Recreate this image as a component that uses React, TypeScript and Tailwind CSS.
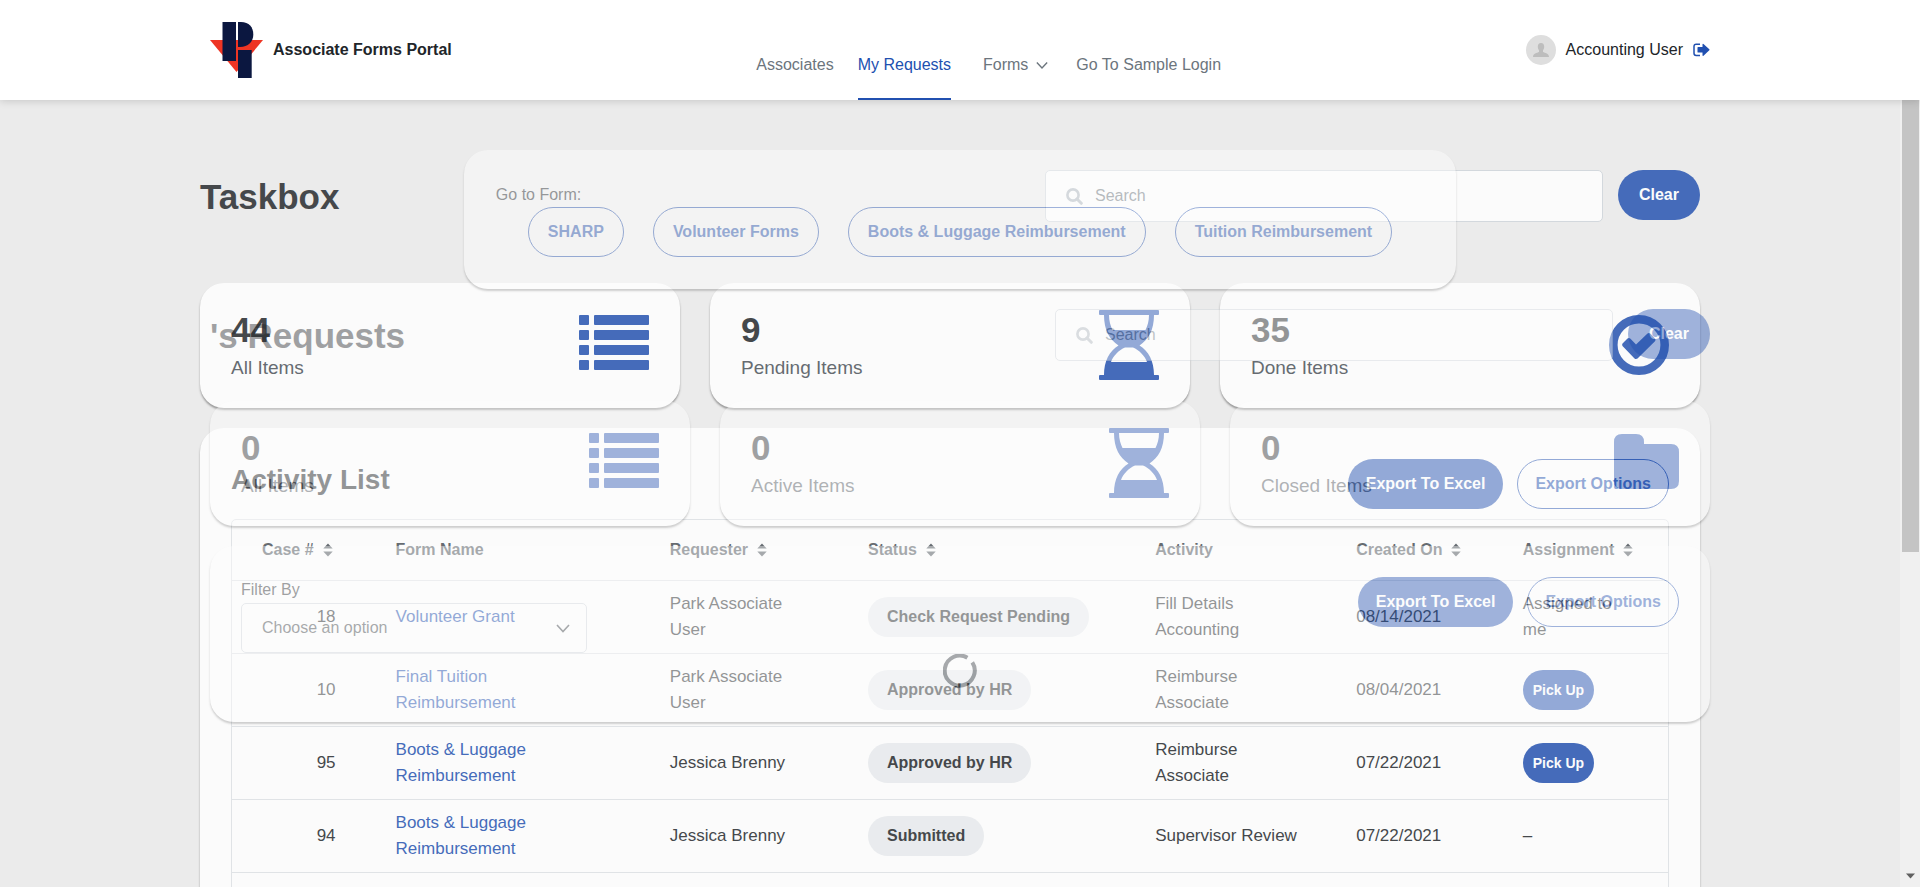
import React from "react";

type IconProps = { className?: string };

const card =
  "rounded-[24px] bg-white shadow-[0_2px_2px_rgba(0,0,0,0.42)]";
const outlineButton =
  "h-[50px] whitespace-nowrap rounded-full border border-[#2150b0] text-base font-bold text-[#2150b0]";
const solidButton =
  "h-[50px] whitespace-nowrap rounded-full bg-[#2150b0] text-base font-bold text-white";

function Logo() {
  return (
    <svg width="53" height="56" viewBox="0 0 53 56" role="img" aria-label="Logo">
      <path d="M0 18H53L26.5 50Z" fill="#ee3524" />
      <path d="M12.5 0H26V39H12.5Z" fill="#0b1740" />
      <path d="M28 0H31C39 0 43.3 5 43.3 12.5S38 25 30 25H28Z" fill="#0b1740" />
      <path d="M28 28H41.7V56H28Z" fill="#0b1740" />
      <path d="M26.4 0H27.8V18H26.4Z" fill="#fff" />
    </svg>
  );
}

function ListIcon({ className }: IconProps) {
  return (
    <svg width="70" height="70" viewBox="0 0 70 70" fill="currentColor" className={className} aria-hidden="true">
      {[5, 20, 35, 50].map((y) => (
        <g key={y}>
          <rect x="0" y={y} width="10" height="10" rx="1" />
          <rect x="15" y={y} width="55" height="10" rx="1" />
        </g>
      ))}
    </svg>
  );
}

function HourglassIcon({ className }: IconProps) {
  return (
    <svg width="60" height="70" viewBox="0 0 60 70" fill="currentColor" className={className} aria-hidden="true">
      <rect width="60" height="5" rx="1" />
      <rect y="65" width="60" height="5" rx="1" />
      <path
        fillRule="evenodd"
        d="M5 5C5 20 10.500 29.500 19.500 35.500C10.500 41 5 51 5 65H55C55 51 49.500 41 40.500 35.500C49.500 29.500 55 20 55 5ZM10 5H50C50 11 48.500 16 46.500 20H13.500C11.500 16 10 11 10 5ZM26 37.500H34C40 40 46 46 48 52H12C14 46 20 40 26 37.500Z"
      />
    </svg>
  );
}

function DoneIcon({ className }: IconProps) {
  return (
    <svg width="60" height="70" viewBox="0 0 60 70" fill="currentColor" className={className} aria-hidden="true">
      <circle cx="30" cy="35" r="25.700" fill="none" stroke="currentColor" strokeWidth="8.600" />
      <path d="M13.500 33.500L18.500 28.500Q20 27.500 21.500 28.800L27 34.500L38.500 23.500Q40 22.500 41.500 23.800L46.200 28.700Q47 30 46 31.200L28.500 48.500Q27 49.500 25.500 48.400L13.500 36Q12.700 34.700 13.500 33.500Z" />
    </svg>
  );
}

function FolderIcon({ className }: IconProps) {
  return (
    <svg width="65" height="70" viewBox="0 0 65 70" fill="currentColor" className={className} aria-hidden="true">
      <path d="M8 6H22Q30 6 30 14V16H57Q65 16 65 24V53Q65 61 57 61H8Q0 61 0 53V14Q0 6 8 6Z" />
    </svg>
  );
}

function SearchIcon({ className }: IconProps) {
  return (
    <svg width="17" height="17" viewBox="0 0 17 17" fill="none" stroke="currentColor" className={className} aria-hidden="true">
      <circle cx="7" cy="7" r="5.600" strokeWidth="2.600" />
      <path d="M11 11L15.300 15.300" strokeWidth="3" strokeLinecap="round" />
    </svg>
  );
}

function Chevron({ className, size = 14 }: IconProps & { size?: number }) {
  return (
    <svg width={size} height={size} viewBox="0 0 14 14" fill="none" stroke="currentColor" className={className} aria-hidden="true">
      <path d="M1 4L7 10.500L13 4" strokeWidth="1.600" />
    </svg>
  );
}

function SortIcon() {
  return (
    <svg width="10" height="14" viewBox="0 0 10 14" fill="currentColor" aria-hidden="true">
      <path d="M5 0.500L9.700 5.500H0.300Z" />
      <path d="M5 13.500L9.700 8.500H0.300Z" />
    </svg>
  );
}

function SignOutIcon() {
  return (
    <svg width="17" height="14" viewBox="0 0 17 14" aria-hidden="true">
      <path d="M7 1.200H3.200Q1 1.200 1 3.400V10.200Q1 12.400 3.200 12.400H7" fill="none" stroke="#2150b0" strokeWidth="1.500" />
      <path d="M4.500 4.600Q4.500 4 5.100 4H9.500V1.200Q9.700 0.300 10.500 0.900L16.300 6.300Q16.800 6.800 16.300 7.300L10.500 12.700Q9.700 13.200 9.500 12.400V9.600H5.100Q4.500 9.600 4.500 9Z" fill="#2150b0" />
    </svg>
  );
}

function Spinner() {
  return (
    <svg width="34" height="34" viewBox="0 0 34 34" fill="none" role="img" aria-label="Loading">
      <path d="M24.400 3.700A15 15 0 1 0 29.300 8.400" stroke="#343a40" strokeWidth="4" />
    </svg>
  );
}

function Header() {
  return (
    <header className="relative z-10 h-[100px] shrink-0 bg-white shadow-[0_1px_8px_rgba(0,0,0,0.16)]">
      <div className="mx-auto flex h-full max-w-[1500px] justify-between">
        <a href="#home" className="flex items-center gap-[10px] font-bold">
          <Logo />
          Associate Forms Portal
        </a>
        <nav className="flex items-end gap-6 text-[#6c757d]" aria-label="Main">
          <a href="#associates" className="flex h-[68px] items-center border-b-2 border-transparent">
            Associates
          </a>
          <a href="#requests" className="flex h-[68px] items-center border-b-2 border-[#2150b0] text-[#2150b0]">
            My Requests
          </a>
          <button type="button" className="ml-2 flex h-[68px] items-center gap-2 border-b-2 border-transparent">
            Forms
            <Chevron size={12} />
          </button>
          <a href="#login" className="ml-1 flex h-[68px] items-center border-b-2 border-transparent">
            Go To Sample Login
          </a>
        </nav>
        <div className="flex items-center justify-end gap-[10px]">
          <svg width="30" height="30" viewBox="0 0 30 30" aria-hidden="true">
            <circle cx="15" cy="15" r="15" fill="#dedede" />
            <path d="M15 8C17.200 8 18.200 9.600 18.200 11.800C18.200 13.600 17.400 14.800 17 15.600V17C19 18 23 18.400 23 22H7C7 18.400 11 18 13 17V15.600C12.600 14.800 11.800 13.600 11.800 11.800C11.800 9.600 12.800 8 15 8Z" fill="#bdbdbd" />
          </svg>
          <span>Accounting User</span>
          <button type="button" aria-label="Sign out">
            <SignOutIcon />
          </button>
        </div>
      </div>
    </header>
  );
}

function SearchRow({ title, label }: { title: string; label: string }) {
  return (
    <div className="flex items-start">
      <h1 className="grow text-[35px] leading-[54px] font-bold">{title}</h1>
      <div className="flex h-[52px] w-[558px] items-center gap-3 rounded-[5px] border border-[#ced4da] bg-white pl-5">
        <SearchIcon className="text-[#adb5bd]" />
        <input
          type="search"
          aria-label={label}
          placeholder="Search"
          className="min-w-0 grow bg-transparent outline-none placeholder:text-[#6c757d]"
        />
      </div>
      <button type="button" className={`ml-[15px] px-[21px] ${solidButton}`}>
        Clear
      </button>
    </div>
  );
}

type Stat = { value: string; label: string; Icon: (p: IconProps) => React.ReactElement };

function Stats({ items }: { items: Stat[] }) {
  return (
    <div className="grid grid-cols-3 gap-[30px]">
      {items.map(({ value, label, Icon }) => (
        <section key={label} className={`flex h-[125px] justify-between px-[31px] pt-[27px] ${card}`}>
          <div>
            <p className="text-[35px] leading-[40px] font-bold">{value}</p>
            <p className="pt-[6px] text-[19px] leading-[24px] text-[#495057]">{label}</p>
          </div>
          <Icon className="text-[#2150b0]" />
        </section>
      ))}
    </div>
  );
}

function ExportButtons() {
  return (
    <div className="flex gap-[14px]">
      <button type="button" className={`px-[18px] ${solidButton}`}>
        Export To Excel
      </button>
      <button type="button" className={`px-[17px] ${outlineButton}`}>
        Export Options
      </button>
    </div>
  );
}

const columns = [
  { name: "Case #", sortable: true, width: "w-[9.300%]" },
  { name: "Form Name", sortable: false, width: "w-[19.100%]" },
  { name: "Requester", sortable: true, width: "w-[13.800%]" },
  { name: "Status", sortable: true, width: "w-[20%]" },
  { name: "Activity", sortable: false, width: "w-[14%]" },
  { name: "Created On", sortable: true, width: "w-[11.600%]" },
  { name: "Assignment", sortable: true, width: "w-[12.200%]" },
];

const rows = [
  ["18", "Volunteer Grant", "Park Associate User", "Check Request Pending", "Fill Details Accounting", "08/14/2021", "Assigned to me"],
  ["10", "Final Tuition Reimbursement", "Park Associate User", "Approved by HR", "Reimburse Associate", "08/04/2021", "Pick Up"],
  ["95", "Boots & Luggage Reimbursement", "Jessica Brenny", "Approved by HR", "Reimburse Associate", "07/22/2021", "Pick Up"],
  ["94", "Boots & Luggage Reimbursement", "Jessica Brenny", "Submitted", "Supervisor Review", "07/22/2021", "–"],
];

function ActivityTable() {
  return (
    <div className="rounded-[5px] border border-[#dee2e6]">
      <table className="w-full table-fixed text-left">
        <thead>
          <tr className="h-[60px] text-[#495057]">
            {columns.map((c) => (
              <th key={c.name} scope="col" className={`pl-[30px] font-bold ${c.width}`}>
                {c.sortable ? (
                  <button type="button" className="flex items-center gap-[9px] whitespace-nowrap">
                    {c.name}
                    <SortIcon />
                  </button>
                ) : (
                  c.name
                )}
              </th>
            ))}
          </tr>
        </thead>
        <tbody className="text-[17px] leading-[26px]">
          {rows.map(([id, form, requester, status, activity, created, assignment]) => (
            <tr key={id} className="h-[73px] border-t border-[#dee2e6]">
              <td className="pr-[30px] text-right">{id}</td>
              <td className="pr-[90px] pl-[30px]">
                <a href={`#case-${id}`} className="text-[#2150b0]">
                  {form}
                </a>
              </td>
              <td className="px-[30px]">{requester}</td>
              <td className="pl-[30px]">
                <span className="inline-flex h-10 items-center rounded-full bg-[#e9ecef] px-[19px] align-middle text-base font-bold">
                  {status}
                </span>
              </td>
              <td className="pr-5 pl-[30px]">{activity}</td>
              <td className="pl-[30px]">{created}</td>
              <td className="pr-[50px] pl-[30px]">
                {assignment === "Pick Up" ? (
                  <button
                    type="button"
                    className="h-10 rounded-full bg-[#2150b0] px-[10px] align-middle text-sm font-bold whitespace-nowrap text-white"
                  >
                    Pick Up
                  </button>
                ) : (
                  assignment
                )}
              </td>
            </tr>
          ))}
          <tr className="h-[73px] border-t border-[#dee2e6]">
            <td colSpan={7} />
          </tr>
        </tbody>
      </table>
    </div>
  );
}

function TaskboxPage() {
  return (
    <div className="mx-auto max-w-[1500px] pt-[70px] opacity-[0.82]">
      <SearchRow title="Taskbox" label="Search tasks" />
      <div className="pt-[59px]">
        <Stats
          items={[
            { value: "44", label: "All Items", Icon: ListIcon },
            { value: "9", label: "Pending Items", Icon: HourglassIcon },
            { value: "35", label: "Done Items", Icon: DoneIcon },
          ]}
        />
      </div>
      <section className={`mt-5 px-[31px] pt-[31px] pb-[31px] ${card}`}>
        <div className="flex items-start justify-between pb-[10px]">
          <h2 className="text-[28px] leading-[42px] font-bold">Activity List</h2>
          <ExportButtons />
        </div>
        <ActivityTable />
      </section>
    </div>
  );
}

function RequestsPage() {
  return (
    <div className="mx-auto w-full max-w-[1500px] pt-[50px] opacity-[0.42]">
      <section className={`mx-auto h-[139px] w-fit px-8 pt-[33px] ${card}`}>
        <p className="leading-[24px]">Go to Form:</p>
        <div className="flex gap-[29px] px-8">
          {["SHARP", "Volunteer Forms", "Boots & Luggage Reimbursement", "Tuition Reimbursement"].map((f) => (
            <button key={f} type="button" className={`px-[19px] ${outlineButton}`}>
              {f}
            </button>
          ))}
        </div>
      </section>
      <div className="pt-5 pb-[38px]">
        <SearchRow title="'s Requests" label="Search requests" />
      </div>
      <Stats
        items={[
          { value: "0", label: "All Items", Icon: ListIcon },
          { value: "0", label: "Active Items", Icon: HourglassIcon },
          { value: "0", label: "Closed Items", Icon: FolderIcon },
        ]}
      />
      <section className={`relative mt-5 flex h-[176px] items-start justify-between px-[31px] pt-[31px] ${card}`}>
        <div className="w-[346px]">
          <label htmlFor="filter" className="block leading-[26px]">
            Filter By
          </label>
          <div className="grid items-center">
            <select
              id="filter"
              className="col-start-1 row-start-1 h-[50px] w-full appearance-none rounded-[5px] border border-[#ced4da] bg-transparent px-5 text-[#343a40]"
            >
              <option>Choose an option</option>
            </select>
            <Chevron className="pointer-events-none col-start-1 row-start-1 mr-[17px] justify-self-end text-[#343a40]" />
          </div>
        </div>
        <ExportButtons />
        <div className="absolute inset-x-0 bottom-[34px] flex justify-center">
          <Spinner />
        </div>
      </section>
    </div>
  );
}

function ScrollTrack() {
  return (
    <div className="flex w-5 flex-col items-center justify-between bg-[#f0f0f0] pb-2" aria-hidden="true">
      <div className="h-[58%] w-[17px] bg-[#c4c4c4]" />
      <svg width="9" height="6" viewBox="0 0 9 6">
        <path d="M0 0.500H9L4.500 5.500Z" fill="#606060" />
      </svg>
    </div>
  );
}

export default function App() {
  return (
    <div className="flex h-screen flex-col overflow-hidden bg-[#ebebeb] font-['Liberation_Sans',Arial,sans-serif] text-base text-[#212529]">
      <Header />
      <main className="grid min-h-0 grow grid-cols-1 grid-rows-[minmax(0,1fr)]">
        <div className="col-start-1 row-start-1 flex min-h-0">
          <div className="min-w-0 grow overflow-hidden">
            <TaskboxPage />
          </div>
          <ScrollTrack />
        </div>
        <div className="col-start-1 row-start-1">
          <RequestsPage />
        </div>
      </main>
    </div>
  );
}
